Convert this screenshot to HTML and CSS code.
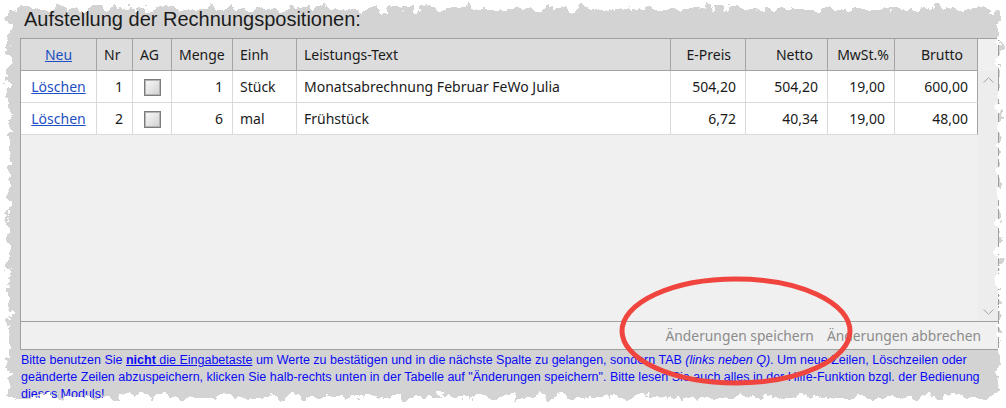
FILE: index.html
```html
<!DOCTYPE html>
<html lang="de">
<head>
<meta charset="utf-8">
<title>Aufstellung der Rechnungspositionen</title>
<link rel="stylesheet" href="styles.css">
</head>
<body>
<div class="paper">
  <h1 class="title">Aufstellung der Rechnungspositionen:</h1>
  <div class="grid">
    <div class="grid-body">
      <table class="pos">
        <thead>
          <tr>
            <th class="c-act center"><a class="lnk" href="#">Neu</a></th>
            <th class="c-nr">Nr</th>
            <th class="c-ag">AG</th>
            <th class="c-menge">Menge</th>
            <th class="c-einh">Einh</th>
            <th class="c-text">Leistungs-Text</th>
            <th class="c-epreis num">E-Preis</th>
            <th class="c-netto num">Netto</th>
            <th class="c-mwst num tight">MwSt.%</th>
            <th class="c-brutto num">Brutto</th>
          </tr>
        </thead>
        <tbody>
          <tr>
            <td class="center"><a class="lnk" href="#">Löschen</a></td>
            <td class="num">1</td>
            <td class="center"><span class="cb"></span></td>
            <td class="num">1</td>
            <td>Stück</td>
            <td>Monatsabrechnung Februar FeWo Julia</td>
            <td class="num">504,20</td>
            <td class="num">504,20</td>
            <td class="num">19,00</td>
            <td class="num">600,00</td>
          </tr>
          <tr>
            <td class="center"><a class="lnk" href="#">Löschen</a></td>
            <td class="num">2</td>
            <td class="center"><span class="cb"></span></td>
            <td class="num">6</td>
            <td>mal</td>
            <td>Frühstück</td>
            <td class="num">6,72</td>
            <td class="num">40,34</td>
            <td class="num">19,00</td>
            <td class="num">48,00</td>
          </tr>
        </tbody>
      </table>
      <div class="scroll">
        <div class="scroll-head"></div>
        <div class="scroll-track">
          <span class="arrow"><svg width="11" height="6" viewBox="0 0 11 6"><path d="M0.5 5.5 L5.5 0.8 L10.5 5.5" fill="none" stroke="#a6a6a6" stroke-width="1"/></svg></span>
          <span class="arrow"><svg width="11" height="6" viewBox="0 0 11 6"><path d="M0.5 0.5 L5.5 5.2 L10.5 0.5" fill="none" stroke="#a6a6a6" stroke-width="1"/></svg></span>
        </div>
      </div>
    </div>
    <div class="grid-foot">
      <span class="foot-btn">Änderungen speichern</span>
      <span class="foot-btn">Änderungen abbrechen</span>
    </div>
  </div>
  <p class="hint">Bitte benutzen Sie <span class="ul"><strong>nicht</strong> die Eingabetaste</span> um Werte zu bestätigen und in die nächste Spalte zu gelangen, sondern TAB <em>(links neben Q)</em>. Um neue Zeilen, Löschzeilen oder<br>geänderte Zeilen abzuspeichern, klicken Sie halb-rechts unten in der Tabelle auf "Änderungen speichern". Bitte lesen Sie auch alles in der Hilfe-Funktion bzgl. der Bedienung<br>dieses Moduls!</p>
</div>

<svg class="mark" width="250" height="116" viewBox="0 0 250 116">
  <ellipse cx="125" cy="56" rx="114" ry="52" fill="none" stroke="#f0453f" stroke-width="5"/>
</svg>

<svg class="torn" width="1006" height="408" viewBox="0 0 1006 408">
  <defs>
    <filter id="tear" filterUnits="userSpaceOnUse" x="-100" y="-100" width="1206" height="608" color-interpolation-filters="sRGB">
      <feTurbulence type="fractalNoise" baseFrequency="0.09" numOctaves="4" seed="7" result="noise"/>
      <feDisplacementMap in="SourceGraphic" in2="noise" scale="18" xChannelSelector="R" yChannelSelector="G"/>
    </filter>
  </defs>
  <path filter="url(#tear)" fill="#ffffff" fill-rule="evenodd" d="M-60 -60 H1066 V468 H-60 Z M9 9 H999 V397 H9 Z"/>
</svg>
</body>
</html>
```

FILE: styles.css
```css
* { box-sizing: border-box; }

html, body {
  margin: 0;
  padding: 0;
}

body {
  width: 1006px;
  height: 408px;
  overflow: hidden;
  position: relative;
  background: #ffffff;
  font-family: "Noto Sans", "Open Sans", sans-serif;
}

.paper {
  height: 408px;
  background: #d3d3d3;
  padding-top: 7px;
}

.title {
  margin: 0 0 7px 24px;
  font-family: "Liberation Sans", Arial, sans-serif;
  font-weight: 400;
  font-size: 20px;
  line-height: 24px;
  color: #1c1c1c;
}

.grid {
  margin-left: 20px;
  width: 979px;
  border: 1px solid #a0a0a0;
  background: #f0f0f0;
}

.grid-body {
  display: flex;
  height: 282px;
}

.pos {
  width: 957px;
  flex: 0 0 957px;
  align-self: flex-start;
  table-layout: fixed;
  border-collapse: separate;
  border-spacing: 0;
  font-size: 14px;
  color: #1a1a1a;
}

.pos th,
.pos td {
  height: 32px;
  padding: 0 8px 0 7px;
  white-space: nowrap;
  overflow: hidden;
  text-align: left;
  vertical-align: middle;
}

.pos th {
  font-weight: 400;
  background: #dcdcdc;
  border-right: 1px solid #a3a3a3;
  border-bottom: 1px solid #a3a3a3;
}

.pos td {
  background: #ffffff;
  border-right: 1px solid #dadada;
  border-bottom: 1px solid #dadada;
}

.pos td:last-child {
  border-right-color: #a3a3a3;
}

.pos .center { text-align: center; padding: 0; }
.pos td.num { text-align: right; padding-right: 9px; }
.pos th.num { text-align: right; padding-right: 14px; }
.pos th.tight { padding-right: 5px; padding-left: 0; }

.c-act { width: 76px; }
.c-nr { width: 36px; }
.c-ag { width: 39px; }
.c-menge { width: 61px; }
.c-einh { width: 64px; }
.c-text { width: 374px; }
.c-epreis { width: 75px; }
.c-netto { width: 82px; }
.c-mwst { width: 67px; }
.c-brutto { width: 83px; }

.lnk {
  color: #1d50c2;
  text-decoration: underline;
}

.cb {
  display: inline-block;
  width: 17px;
  height: 17px;
  vertical-align: middle;
  border: 1px solid #7c7c7c;
  box-shadow: inset 0 0 0 1px #b4b4b4;
  background: linear-gradient(135deg, #f8f8f8 0%, #e6e6e6 50%, #cfcfcf 100%);
}

.scroll {
  flex: 1 1 auto;
  display: flex;
  flex-direction: column;
}

.scroll-head {
  height: 32px;
  background: #f0f0f0;
}

.scroll-track {
  flex: 1 1 auto;
  background: #ededed;
  display: flex;
  flex-direction: column;
  justify-content: space-between;
  align-items: center;
}

.arrow {
  display: flex;
  height: 18px;
  align-items: center;
  justify-content: center;
}

.grid-foot {
  height: 28px;
  border-top: 1px solid #a0a0a0;
  display: flex;
  justify-content: flex-end;
  align-items: center;
  gap: 13px;
  padding-right: 17px;
  font-size: 13.8px;
  color: #8c8c8c;
}

.hint {
  margin: 2px 0 0 0;
  padding-left: 21px;
  font-family: "Liberation Sans", Arial, sans-serif;
  font-size: 12.5px;
  line-height: 17px;
  color: #0a0af5;
  white-space: nowrap;
}

.hint .ul { text-decoration: underline; }
.hint strong { font-weight: 700; }
.hint em { font-style: italic; }

.mark {
  position: absolute;
  left: 611px;
  top: 275px;
  pointer-events: none;
}

.torn {
  position: absolute;
  left: 0;
  top: 0;
  pointer-events: none;
}
```
